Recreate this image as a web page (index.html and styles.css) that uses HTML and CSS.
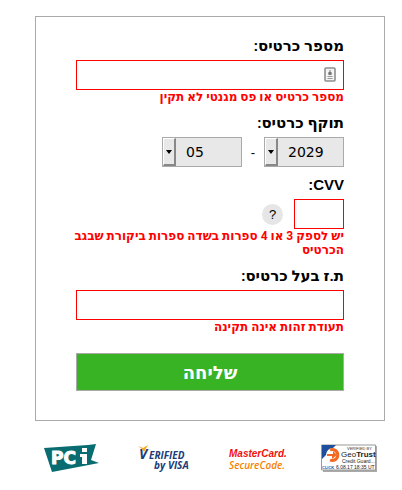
FILE: index.html
```html
<!DOCTYPE html>
<html lang="he" dir="rtl">
<head>
<meta charset="utf-8">
<meta name="viewport" content="width=device-width, initial-scale=1">
<title>תשלום</title>
<link rel="stylesheet" href="styles.css">
</head>
<body>
<main class="page">
  <form class="card">
    <div class="field">
      <label class="label" for="card-number">מספר כרטיס:</label>
      <div class="input-wrap">
        <input class="input" id="card-number" type="text">
        <svg class="autofill" viewBox="0 0 12 16" aria-hidden="true">
          <rect x="1" y="1" width="10" height="13" rx="1" fill="#f4f4f4" stroke="#8e8e8e" stroke-width="1.6"/>
          <path d="M6 3v3M4.800 5.500h2.400v2H4.800z" fill="#777" stroke="#777"/>
          <path d="M3.500 9.500h5M3.500 11.500h5" stroke="#999"/>
        </svg>
      </div>
      <p class="error">מספר כרטיס או פס מגנטי לא תקין</p>
    </div>
    <div class="field">
      <label class="label" for="year">תוקף כרטיס:</label>
      <div class="row">
        <div class="picker">
          <select class="select" id="year" dir="ltr"><option>2029</option></select>
          <span class="arrow"></span>
        </div>
        <span class="dash">-</span>
        <div class="picker">
          <select class="select" id="month" dir="ltr" aria-label="חודש"><option>05</option></select>
          <span class="arrow"></span>
        </div>
      </div>
    </div>
    <div class="field">
      <label class="label latin" for="cvv">CVV:</label>
      <div class="row cvv-row">
        <input class="input cvv" id="cvv" type="text">
        <button class="help" type="button">?</button>
      </div>
      <p class="error">יש לספק 3 או 4 ספרות בשדה ספרות ביקורת שבגב הכרטיס</p>
    </div>
    <div class="field">
      <label class="label" for="holder-id">ת.ז בעל כרטיס:</label>
      <input class="input" id="holder-id" type="text">
      <p class="error">תעודת זהות אינה תקינה</p>
    </div>
    <button class="submit" type="button">שליחה</button>
  </form>
  <footer class="logos" dir="ltr">
    <svg class="logo" viewBox="0 0 58 32" role="img" aria-label="PCI">
      <path d="M2 6 46 3 54 2 49 18 57 21 10 30z" fill="#086c70"/>
      <text x="9" y="22" class="pci">PC</text>
      <path d="M38 12h7v10h-5v-7h-2zM40 6h5v4h-5z" fill="#fff"/>
    </svg>
    <svg class="logo" viewBox="0 0 58 32" role="img" aria-label="Verified by VISA">
      <text x="4" y="17" class="visa-v">V</text>
      <text x="14" y="17" class="visa">ERIFIED</text>
      <text x="19" y="27" class="visa">by</text>
      <text x="33" y="27" class="visa">VISA</text>
      <path d="M3 4 8 6 13 3 9 10 7 7z" fill="#f7a823"/>
    </svg>
    <svg class="logo" viewBox="0 0 58 32" role="img" aria-label="MasterCard SecureCode">
      <text x="2" y="15" class="mc mc-red">MasterCard.</text>
      <text x="2" y="27" class="mc mc-orange">SecureCode.</text>
    </svg>
    <svg class="logo" viewBox="0 0 58 32" role="img" aria-label="GeoTrust">
      <path d="M3 4h54v26H3z" fill="#aaa"/>
      <path d="M1.500 3h54v25h-54z" fill="#fff" stroke="#999"/>
      <path d="M2 3h14L2 17z" fill="#1d4f9c"/>
      <circle cx="13" cy="13" r="7" fill="#fff"/>
      <path d="M10 8a5.500 5.500 0 1 1 0 10" fill="none" stroke="#f26a21" stroke-width="3"/>
      <path d="M7 12h6V9l4 4-5 4v-3H7z" fill="#f26a21"/>
      <text x="27" y="8" class="geo-tiny">VERIFIED BY</text>
      <text x="21" y="15" class="geo">Geo<tspan font-weight="bold">Trust</tspan></text>
      <text x="22" y="21" class="geo-small">Credit Guard...</text>
      <text x="2" y="27" class="geo-tiny geo-blue">CLICK</text>
      <text x="16" y="27" class="geo-small">6.08.17 18:35 UT</text>
    </svg>
  </footer>
</main>
</body>
</html>
```
FILE: styles.css
```css
* { box-sizing: border-box; }
body {
  margin: 0;
  background: #fff;
  color: #000;
  font-family: Roboto, "DejaVu Sans", sans-serif;
}
.page { padding: 16px 17px 0 35px; }
.card {
  display: flex;
  flex-direction: column;
  gap: 8px;
  padding: 19px 40px 29px;
  border: 1px solid #aaa;
}
.field { display: flex; flex-direction: column; align-items: flex-start; }
.label {
  margin-bottom: 4px;
  font-size: 15px;
  font-weight: bold;
  line-height: 20px;
}
.latin { font-family: "Liberation Sans", sans-serif; }
.input-wrap { position: relative; width: 100%; }
.input {
  display: block;
  width: 100%;
  height: 30px;
  padding: 0 8px;
  border: 1px solid #f00;
  background: #fff;
  font-size: 14px;
}
.autofill { position: absolute; right: 8px; top: 7px; width: 12px; height: 16px; }
.error {
  margin: 0 0 0 -8px;
  padding-bottom: 1px;
  color: #f00;
  font-size: 12px;
  font-weight: bold;
  line-height: 14px;
}
.row { display: flex; align-items: center; }
.picker { position: relative; width: 80px; }
.select {
  display: block;
  width: 100%;
  height: 30px;
  padding: 0 0 0 23px;
  border: 1px solid #aaa;
  border-radius: 0;
  background: #e8e8e8;
  color: #000;
  font: 14px "DejaVu Sans", sans-serif;
  text-align: left;
  appearance: none;
}
.arrow {
  position: absolute;
  left: 1px;
  top: 1px;
  width: 13px;
  height: 28px;
  border: 1px solid #fff;
  border-right: 2px solid #888;
  border-bottom: 2px solid #888;
  background: #e8e8e8;
  pointer-events: none;
}
.arrow::after {
  content: "";
  position: absolute;
  left: 2px;
  top: 11px;
  border: 3px solid transparent;
  border-top: 4px solid #000;
  border-bottom: 0;
}
.dash { width: 22px; text-align: center; font: 13px "Liberation Sans", sans-serif; }
.cvv-row { gap: 11px; }
.cvv { width: 50px; }
.help {
  width: 21px;
  height: 21px;
  padding: 0;
  border: 0;
  border-radius: 50%;
  background: #e6e6e6;
  color: #000;
  font: 13px "Liberation Sans", sans-serif;
}
.submit {
  height: 38px;
  margin-top: 10px;
  padding: 0;
  border: 1px solid #aaa;
  background: #38b324;
  color: #fff;
  font: bold 18px "DejaVu Sans", sans-serif;
}
.logos { display: flex; justify-content: space-between; padding: 21px 7px 0; }
.logo { display: block; width: 58px; height: 32px; overflow: visible; }
.logo text { font-family: "Liberation Sans", sans-serif; }
.logo .pci { font: bold 17px "DejaVu Sans", sans-serif; fill: #fff; stroke: #fff; }
.logo .visa-v { font: italic bold 14px "Open Sans", sans-serif; fill: #1b3c78; }
.logo .visa { font: italic bold 10px "Open Sans", sans-serif; fill: #1b3c78; }
.logo .mc { font: italic bold 10px "Liberation Sans", sans-serif; }
.logo .mc-red { fill: #f01010; }
.logo .mc-orange { font: italic 600 10px "Open Sans", sans-serif; fill: #f77f00; }
.logo .geo { font-size: 8px; fill: #222; }
.logo .geo-tiny { font-size: 4px; fill: #333; }
.logo .geo-small { font-size: 5px; fill: #222; }
.logo .geo-blue { font-weight: bold; fill: #1d4f9c; }
```
